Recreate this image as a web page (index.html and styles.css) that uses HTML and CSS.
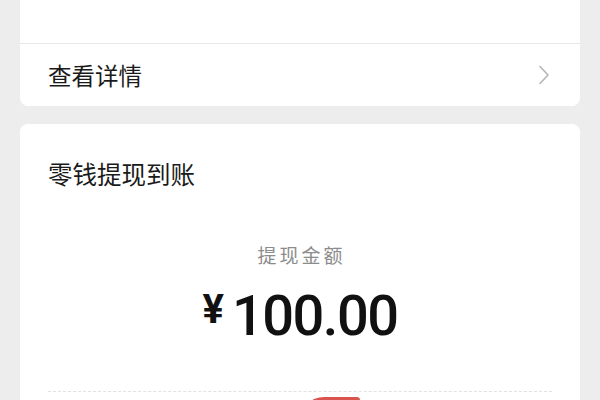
FILE: index.html
```html
<!DOCTYPE html>
<html lang="zh-CN">
<head>
<meta charset="utf-8">
<link rel="stylesheet" href="styles.css">
</head>
<body>
<div class="card card-top">
  <div class="top-row">
    <div class="top-text">提现申请已提交 · 微信零钱将在两小时内到账</div>
  </div>
  <div class="detail-row">
    <span class="detail-label">查看详情</span>
    <svg class="chevron" width="12" height="20" viewBox="0 0 12 20"><path d="M2 1.5 L10 10 L2 18.5" fill="none" stroke="#b5b5b5" stroke-width="1.6" stroke-linecap="round" stroke-linejoin="round"/></svg>
  </div>
</div>
<div class="card card-main">
  <div class="title">零钱提现到账</div>
  <div class="amount-label">提现金额</div>
  <div class="amount">
    <span class="yen">¥</span><span class="num">100.00</span>
  </div>
  <div class="dashed"></div>
  <div class="stamp-wrap"><div class="stamp"></div></div>
</div>
</body>
</html>
```
FILE: styles.css
```css
html, body {
  margin: 0;
  padding: 0;
}
body {
  background: #ededed;
  padding: 0 20px;
  font-family: "Noto Sans CJK SC", "Noto Sans", sans-serif;
  color: #191919;
  height: 400px;
  overflow: hidden;
}
.card {
  background: #ffffff;
  border-radius: 8px;
}
.card-top {
  margin-top: -40px;
}
.top-row {
  height: 83px;
  padding: 17px 28px 0;
  box-sizing: border-box;
}
.top-text {
  font-size: 17px;
  line-height: 24px;
  color: #c4c4c4;
}
.detail-row {
  height: 63px;
  border-top: 1px solid #e8e8e8;
  box-sizing: border-box;
  padding: 0 30px 0 28px;
  display: flex;
  align-items: center;
  justify-content: space-between;
}
.detail-label {
  font-size: 23.5px;
  line-height: 32px;
  color: #1a1a1a;
}
.chevron {
  display: block;
}
.card-main {
  margin-top: 18px;
  padding: 33px 28px 0;
  height: 400px;
}
.title {
  font-size: 24.5px;
  line-height: 34px;
  color: #1a1a1a;
}
.amount-label {
  margin-top: 52px;
  text-align: center;
  font-size: 19px;
  line-height: 24px;
  letter-spacing: 3px;
  padding-left: 3px;
  color: #8c8c8c;
}
.amount {
  margin-top: 17px;
  display: flex;
  justify-content: center;
  align-items: center;
  height: 64px;
}
.yen {
  font-family: Roboto, "Liberation Sans", sans-serif;
  font-weight: 700;
  font-size: 40px;
  line-height: 40px;
  margin-right: 8px;
  margin-bottom: 13px;
  color: #111;
}
.num {
  font-family: Roboto, "Liberation Sans", sans-serif;
  font-weight: 500;
  font-size: 56px;
  line-height: 64px;
  letter-spacing: -1.5px;
  color: #111;
}
.dashed {
  margin-top: 43px;
  height: 0;
  border-top: 1px dashed #e2e2e2;
}
.stamp-wrap {
  display: flex;
  justify-content: center;
  padding-top: 5px;
}
.stamp {
  width: 60px;
  height: 24px;
  margin-left: 60px;
  background: #d9534f;
  border-radius: 30px 4px 0 0;
}
```
